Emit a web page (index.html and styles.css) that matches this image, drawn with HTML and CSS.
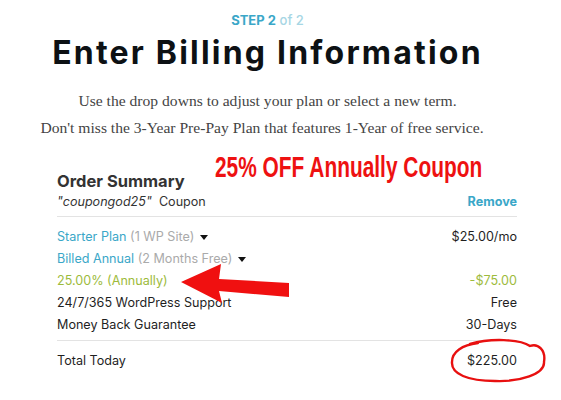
FILE: index.html
```html
<!DOCTYPE html>
<html>
<head>
<meta charset="utf-8">
<link rel="stylesheet" href="styles.css">
</head>
<body>
<div class="page">
  <header class="head">
    <div class="step"><b>STEP 2</b> <span>of 2</span></div>
    <h1 class="title">Enter Billing Information</h1>
    <p class="lead l1">Use the drop downs to adjust your plan or select a new term.</p>
    <p class="lead l2">Don't miss the 3-Year Pre-Pay Plan that features 1-Year of free service.</p>
  </header>

  <section class="summary">
    <h2 class="sum-title">Order Summary</h2>
    <div class="row coupon-row">
      <span><i>"coupongod25"</i>&nbsp; Coupon</span>
      <a class="remove">Remove</a>
    </div>
    <div class="lines">
      <div class="row"><span><span class="teal">Starter Plan</span> <span class="muted">(1 WP Site)</span> <span class="caret"></span></span><span>$25.00/mo</span></div>
      <div class="row"><span><span class="teal">Billed Annual</span> <span class="muted">(2 Months Free)</span> <span class="caret"></span></span><span></span></div>
      <div class="row green"><span>25.00% (Annually)</span><span>-$75.00</span></div>
      <div class="row"><span>24/7/365 WordPress Support</span><span>Free</span></div>
      <div class="row"><span>Money Back Guarantee</span><span>30-Days</span></div>
    </div>
    <div class="row total"><span>Total Today</span><span>$225.00</span></div>
  </section>

  <div class="promo">25% OFF Annually Coupon</div>
  <svg class="marks" width="561" height="400" viewBox="0 0 561 400">
    <polygon points="181,282 221,264 219,279 289,283 289,297 219,291 222,303" fill="#f01010"/>
    <path d="M470 344 C 490 338, 520 339, 530 346 C 538 343, 546 350, 544 362 C 545 374, 520 382, 495 381 C 468 381, 451 374, 452 362 C 452 352, 462 345, 478 343" fill="none" stroke="#e81010" stroke-width="2.4" stroke-linecap="round"/>
  </svg>
</div>
</body>
</html>
```
FILE: styles.css
```css
* { box-sizing: border-box; }
body {
  margin: 0;
  background: #fff;
  font-family: Inter, "Noto Sans", sans-serif;
  color: #1d1d1f;
}
.page {
  position: relative;
  width: 561px;
  height: 400px;
  overflow: hidden;
}
.head {
  display: flex;
  flex-direction: column;
  align-items: center;
  padding-top: 12px;
}
.step {
  font-size: 13px;
  line-height: 16px;
  color: #3aa7c8;
  margin-right: 26px;
}
.step b { font-weight: 700; }
.step span { color: #a6d6e4; font-weight: 500; }
.title {
  margin: 5px 26px 0 0;
  font-size: 32px;
  line-height: 40px;
  font-weight: 700;
  letter-spacing: 2.2px;
  color: #0d1114;
}
.lead {
  margin: 0;
  font-family: "Liberation Serif", serif;
  font-size: 15.6px;
  line-height: 27px;
  color: #444;
}
.l1 { margin-top: 14px; margin-right: 26px; }
.l2 { margin-right: 37px; }

.summary {
  margin: 30px 44px 0 57px;
  font-size: 12.6px;
}
.sum-title {
  margin: 0;
  font-size: 16.5px;
  line-height: 20px;
  font-weight: 700;
  color: #333;
}
.row {
  display: flex;
  justify-content: space-between;
  align-items: center;
  height: 22px;
  color: #1f1f1f;
}
.coupon-row { height: 22px; color: #333; padding-bottom: 1px; }
.coupon-row i { font-style: italic; }
.remove { color: #3aa7c8; font-weight: 700; }
.lines {
  border-top: 1px solid #e3e3e3;
  border-bottom: 1px solid #e3e3e3;
  margin-top: 3px;
  padding: 8px 0 5px;
}
.teal { color: #3aa7c8; }
.muted { color: #aaa; }
.green { color: #9dbb3c; }
.caret {
  display: inline-block;
  width: 0; height: 0;
  border-left: 4px solid transparent;
  border-right: 4px solid transparent;
  border-top: 5px solid #111;
  vertical-align: middle;
  margin-left: 2px;
}
.total { margin-top: 8px; }

.promo {
  position: absolute;
  left: 215px;
  top: 150px;
  font-family: "Liberation Sans", sans-serif;
  font-weight: 700;
  font-size: 29px;
  line-height: 34px;
  color: #ee1111;
  white-space: nowrap;
  transform: scaleX(0.72);
  transform-origin: left center;
}
.marks {
  position: absolute;
  left: 0; top: 0;
  pointer-events: none;
}
```
